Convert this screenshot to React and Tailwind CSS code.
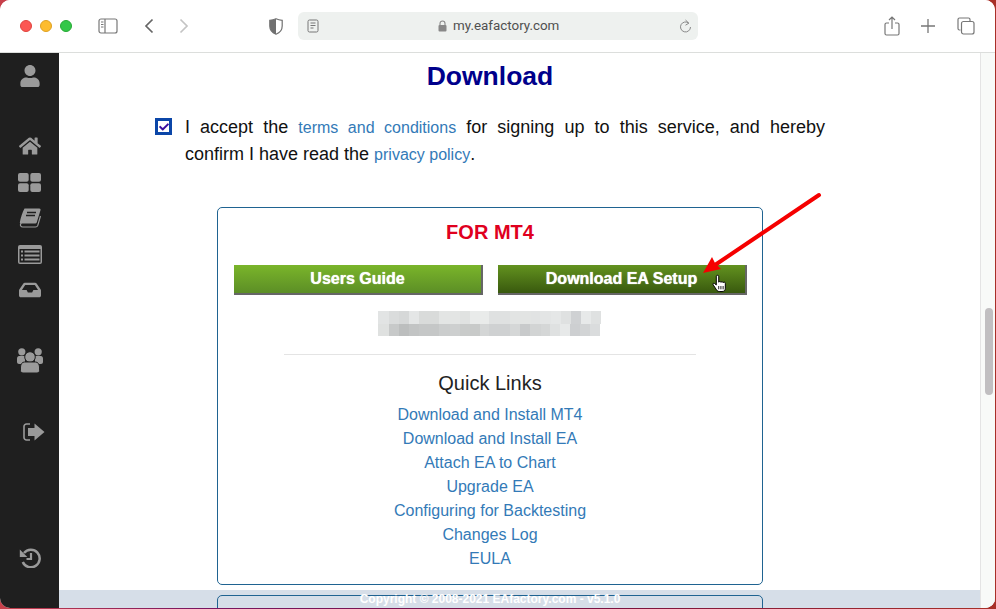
import React from "react";
import { FaUser, FaHome, FaInbox, FaCheck } from "react-icons/fa";

const links = [
  "Download and Install MT4",
  "Download and Install EA",
  "Attach EA to Chart",
  "Upgrade EA",
  "Configuring for Backtesting",
  "Changes Log",
  "EULA",
];

// blurred licence key, [width, colour] per mosaic cell
const blurTop = [
  [11, "#e2e4e4"], [10, "#dadcdc"], [10, "#d6d8d8"], [10, "#e4e6e6"], [20, "#d9dbda"],
  [21, "#e3e5e4"], [10, "#e0e2e1"], [19, "#e9ebea"], [21, "#dfe1e1"], [21, "#e2e4e3"],
  [9, "#e1e3e3"], [11, "#e3e5e5"], [10, "#e5e7e7"], [10, "#dfe1e1"], [10, "#cfd1d3"],
  [10, "#e7e9e9"], [10, "#dfe1e1"],
];
const blurBottom = [
  [11, "#dfe1e0"], [10, "#c7c9c9"], [10, "#bcbebe"], [10, "#c2c4c4"], [20, "#c5c7c7"],
  [11, "#cbcdcd"], [10, "#cdcfcf"], [10, "#c9cbca"], [10, "#c8cac9"], [9, "#d4d6d6"],
  [21, "#cfd1d2"], [10, "#d5d7d7"], [10, "#c8cacb"], [11, "#d2d4d4"], [9, "#d5d7d7"],
  [10, "#dfe1e1"], [10, "#e7e9e9"], [10, "#cdcfd1"], [10, "#d2d4d5"], [10, "#dadcdd"],
];

const BlurRow = ({ cells }) => (
  <div className="flex h-[12.5px]">
    {cells.map(([w, c], i) => (
      <div key={i} style={{ width: w, backgroundColor: c }} />
    ))}
  </div>
);

const ToolbarIcons = () => (
  <>
    {/* traffic lights */}
    <div className="flex gap-2 ml-[20px]">
      <div className="w-3 h-3 rounded-full bg-[#fc5753] border border-[#e0443e]" />
      <div className="w-3 h-3 rounded-full bg-[#fdbc2e] border border-[#dea123]" />
      <div className="w-3 h-3 rounded-full bg-[#33c748] border border-[#27aa35]" />
    </div>
    {/* sidebar toggle */}
    <svg className="ml-[26px]" width="20" height="16" viewBox="0 0 20 16" fill="none" stroke="#777" strokeWidth="1.2">
      <rect x="1" y="1" width="18" height="14" rx="2" />
      <path d="M7 1v14" />
      <path d="M3 4h2.500M3 6.500h2.500M3 9h2.500" strokeWidth="1.100" />
    </svg>
    {/* back / forward */}
    <svg className="ml-[26px]" width="10" height="16" viewBox="0 0 10 16" fill="none" stroke="#666" strokeWidth="1.7">
      <path d="M8.500 1.500L2 8l6.500 6.500" />
    </svg>
    <svg className="ml-[25px]" width="10" height="16" viewBox="0 0 10 16" fill="none" stroke="#c4c4c4" strokeWidth="1.7">
      <path d="M1.500 1.500L8 8l-6.500 6.500" />
    </svg>
    {/* shield */}
    <svg className="ml-[80px]" width="14" height="17" viewBox="0 0 14 17">
      <path d="M7 .8C5 1.800 3 2.200 .8 2.300V8c0 4 2.500 6.800 6.200 8.200 3.700-1.400 6.200-4.200 6.200-8.200V2.300C11 2.200 9 1.800 7 .8z" fill="#fff" stroke="#707070" strokeWidth="1.200" />
      <path d="M7 .8C5 1.800 3 2.200 .8 2.300V8c0 4 2.500 6.800 6.200 8.200z" fill="#707070" />
    </svg>
  </>
);

// font awesome 4 glyphs that the newer icon sets redrew
const GridIcon = () => (
  <svg width="23" height="19" viewBox="0 0 23 19" fill="#9a9a9a">
    <rect width="10.700" height="8.800" rx="2" />
    <rect x="12.300" width="10.700" height="8.800" rx="2" />
    <rect y="10.200" width="10.700" height="8.800" rx="2" />
    <rect x="12.300" y="10.200" width="10.700" height="8.800" rx="2" />
  </svg>
);

const BookIcon = () => (
  <svg width="22" height="20" viewBox="0 0 22 20">
    <path d="M5.500.5h14.800c1 0 1.500.8 1.200 1.800l-3.700 11.900c-.4 1.100-1 1.400-2 1.400H4c-1.300 0-2 .5-2.200 1.100L.8 14.500C1.500 10 3.500 4 5.500.5z" fill="#9a9a9a" />
    <path d="M1.700 15.800c-.7 1.700.2 3.200 2 3.200h12.800c1.200 0 1.900-.5 2.300-1.600L21.500 8" fill="none" stroke="#9a9a9a" strokeWidth="1.200" />
    <path d="M8 4.500h9M7 7.500h9" stroke="#1f1f1f" strokeWidth="1.300" />
  </svg>
);

const ListIcon = () => (
  <svg width="24" height="19" viewBox="0 0 24 19">
    <rect width="24" height="19" rx="2" fill="#9a9a9a" />
    <rect x="1.500" y="4" width="21" height="13.500" fill="#1f1f1f" />
    <g fill="#9a9a9a">
      <rect x="3" y="5.500" width="2" height="2" />
      <rect x="3" y="9.500" width="2" height="2" />
      <rect x="3" y="13.500" width="2" height="2" />
      <rect x="6.500" y="5.500" width="15" height="2" />
      <rect x="6.500" y="9.500" width="15" height="2" />
      <rect x="6.500" y="13.500" width="15" height="2" />
    </g>
  </svg>
);

const UsersIcon = () => (
  <svg width="26" height="25" viewBox="0 0 26 25" fill="#9a9a9a">
    <circle cx="4.800" cy="3.800" r="3.600" />
    <circle cx="21.200" cy="3.800" r="3.600" />
    <path d="M0 10.500C0 9 1 8 2 8h6v8H2c-1 0-2-.8-2-2z" />
    <path d="M26 10.500C26 9 25 8 24 8h-6v8h6c1 0 2-.8 2-2z" />
    <circle cx="13" cy="9" r="5.300" stroke="#1f1f1f" strokeWidth="1" />
    <path d="M3.500 19c0-3 1.800-5 4-5h11c2.200 0 4 2 4 5v3.500c0 1.500-1 2.500-2.500 2.500H6c-1.500 0-2.500-1-2.500-2.500z" stroke="#1f1f1f" strokeWidth="1" />
  </svg>
);

const SignOutIcon = () => (
  <svg width="22" height="18" viewBox="0 0 22 18">
    <path d="M7 1H3.500A2.500 2.500 0 001 3.500v11A2.500 2.500 0 003.500 17H7" fill="none" stroke="#9a9a9a" strokeWidth="1.600" />
    <path d="M5 5h6.500V.5L21.500 9l-10 8.500V13H5z" fill="#9a9a9a" />
  </svg>
);

const HistoryIcon = () => (
  <svg width="22" height="20" viewBox="0 0 22 20" fill="none">
    <path d="M5 5A8.800 8.800 0 1 1 3.800 14" stroke="#9a9a9a" strokeWidth="2.500" />
    <path d="M.8 1.500V9h7.500z" fill="#9a9a9a" />
    <path d="M12 5v6H7.500" stroke="#9a9a9a" strokeWidth="2.200" />
  </svg>
);

const App = () => {
  const side = "h-9 flex items-center justify-center text-[#9a9a9a] text-[22px]";
  return (
    <div className="w-[996px] h-[609px] overflow-hidden bg-[linear-gradient(90deg,#c8404a_0%,#7a1560_20%,#7a1040_60%,#a83028_100%)]">
      <div className="w-[995px] h-[608px] rounded-[10px] overflow-hidden bg-white flex flex-col font-['Liberation_Sans',Arial,sans-serif] relative">
        {/* browser toolbar */}
        <div className="h-[53px] shrink-0 border-b border-[#dcdedc] flex items-center bg-white">
          <ToolbarIcons />
          <div className="ml-[15px] w-[400px] h-[28px] rounded-[6px] bg-[#eef1ef] flex items-center relative">
            <svg className="ml-[9px]" width="12" height="14" viewBox="0 0 12 14" fill="none" stroke="#777" strokeWidth="1">
              <rect x="1" y="1" width="10" height="12" rx="1.500" />
              <path d="M3.500 4h5M3.500 6.500h5M3.500 9h3" />
            </svg>
            <div className="absolute left-[140px] top-0 h-full flex items-center gap-[6px] text-[13.4px] text-[#505050] font-['Roboto',sans-serif]">
              <svg width="9" height="12" viewBox="0 0 9 12" fill="none">
                <path d="M2 5V3.500a2.500 2.500 0 015 0V5" stroke="#888" strokeWidth="1.100" />
                <rect x=".5" y="5" width="8" height="6.500" rx="1" fill="#888" />
              </svg>
              <span>my.eafactory.com</span>
            </div>
            <svg className="absolute right-[6px] top-[7px]" width="13" height="15" viewBox="0 0 13 15" fill="none" stroke="#888" strokeWidth="1">
              <path d="M9.800 4.200A5 5 0 1011.500 8" />
              <path d="M6.500 1l3.300 3.200-3.300 2" />
            </svg>
          </div>
          <svg className="ml-[186px]" width="16" height="20" viewBox="0 0 16 20" fill="none" stroke="#777" strokeWidth="1.200">
            <path d="M5 7H2.500a1.500 1.500 0 00-1.500 1.500v9A1.500 1.500 0 002.500 19h11a1.500 1.500 0 001.500-1.500v-9A1.500 1.500 0 0013.500 7H11" />
            <path d="M8 13V1.500M5 4l3-3 3 3" />
          </svg>
          <svg className="ml-[21px]" width="14" height="14" viewBox="0 0 14 14" stroke="#777" strokeWidth="1.300">
            <path d="M7 0v14M0 7h14" />
          </svg>
          <svg className="ml-[22px]" width="18" height="18" viewBox="0 0 18 18" fill="none" stroke="#777" strokeWidth="1.200">
            <path d="M3.500 13H2.500A1.500 1.500 0 011 11.500v-9A1.500 1.500 0 012.500 1h9A1.500 1.500 0 0113 2.500V4" />
            <rect x="4.500" y="4.500" width="12.500" height="12.500" rx="2" />
          </svg>
        </div>

        <div className="flex-1 flex min-h-0">
          {/* left nav */}
          <div className="w-[59px] shrink-0 bg-[#1f1f1f] pt-[5px] flex flex-col">
            <div className={side}><FaUser /></div>
            <div className={`${side} mt-[34px]`}><FaHome /></div>
            <div className={side}><GridIcon /></div>
            <div className={side}><BookIcon /></div>
            <div className={side}><ListIcon /></div>
            <div className={side}><FaInbox /></div>
            <div className={`${side} mt-[34px]`}><UsersIcon /></div>
            <div className={`${side} mt-9 pl-[8px]`}><SignOutIcon /></div>
            <div className={`${side} mt-[90px]`}><HistoryIcon /></div>
          </div>

          {/* page */}
          <div className="flex-1 relative overflow-hidden bg-white">
            <div className="relative z-10 pl-[96px] pt-[7px]">
              <div className="w-[670px]">
                <h1 className="text-center text-[26.5px] leading-[32px] font-bold text-[#00008b]">Download</h1>
                <div className="flex mt-[22px]">
                  <div className="w-[17px] h-[17px] mt-[4px] shrink-0 border-[3px] border-[#0b46a8] flex items-center justify-center text-[#3b0fa0] text-[10px]">
                    <FaCheck />
                  </div>
                  <div className="ml-[13px] flex-1 text-[18px] leading-[27px] text-[#111]">
                    <p className="[text-align-last:justify]">
                      I accept the <a className="text-[16px] text-[#337ab7]">terms and conditions</a> for signing up to this service, and hereby
                    </p>
                    <p>
                      confirm I have read the <a className="text-[16px] text-[#337ab7]">privacy policy</a>.
                    </p>
                  </div>
                </div>

                <div className="ml-[62px] mt-[39px] w-[546px] h-[378px] border border-[#1f6391] rounded-[5px] px-4 pt-[13px] bg-white">
                  <div className="text-center text-[20px] leading-[23px] font-bold text-[#e0001e]">FOR MT4</div>
                  <div className="flex gap-[15px] mt-[21px]">
                    <div className="w-[249px] h-[30px] shrink-0 flex items-center justify-center border-r-2 border-b-2 border-[#666] bg-[linear-gradient(#7ab52a,#5c8e26)] text-white text-[16px] font-bold [text-shadow:0_0_1px_#fff]">
                      Users Guide
                    </div>
                    <div className="w-[249px] h-[30px] shrink-0 flex items-center justify-center border-r-2 border-b-2 border-[#666] bg-[linear-gradient(#63921f,#39590e)] text-white text-[16px] font-bold [text-shadow:0_0_1px_#fff]">
                      Download EA Setup
                    </div>
                  </div>
                  <div className="w-[223px] ml-[144px] mt-[16px]">
                    <BlurRow cells={blurTop} />
                    <BlurRow cells={blurBottom} />
                  </div>
                  <div className="mx-[50px] mt-[18px] h-px bg-[#e4e4e4]" />
                  <div className="text-center text-[20px] leading-[24px] text-[#222] mt-[16px]">Quick Links</div>
                  <div className="mt-[8px] flex flex-col items-center text-[16px] leading-[24px] text-[#337ab7]">
                    {links.map((l) => (
                      <a key={l}>{l}</a>
                    ))}
                  </div>
                </div>

                <div className="ml-[62px] mt-[10px] w-[546px] h-[40px] border border-[#1f6391] rounded-[5px]" />
              </div>
            </div>

            {/* footer bar */}
            <div className="absolute left-0 right-0 bottom-0 h-[18px] bg-[#d6dee8] z-0" />
            <div className="absolute left-0 w-[862px] bottom-0 h-[18px] z-20 flex items-center justify-center text-white text-[12px] font-bold">
              Copyright © 2008-2021 EAfactory.com - v5.1.0
            </div>

            {/* scrollbar */}
            <div className="absolute right-0 top-0 bottom-0 w-[15px] bg-[#f8faf8] border-l border-[#e4e4e4] z-30">
              <div className="absolute left-[4px] top-[255px] w-[8px] h-[87px] rounded-full bg-[#c1bfc1]" />
            </div>
          </div>
        </div>

        {/* red annotation arrow and pointer */}
        <svg className="absolute left-0 top-0 z-40 pointer-events-none" width="995" height="608" viewBox="0 0 995 608">
          <path d="M819 195L715 265" stroke="#f50000" strokeWidth="4" strokeLinecap="round" />
          <path d="M703 273L712 257L715 263L721 269z" fill="#f50000" />
          <g transform="translate(713 275) scale(1.100)">
            <path d="M3 1v8L1.500 7.800C.5 7 -.5 8 .2 9l3 4.500c.8 1.200 1.500 1.500 3 1.500h2c2 0 3-1 3-3V7.500c0-1.200-1.500-1.300-2-.5 0-1-1.500-1.200-2-.3 0-1-1.500-1-2-.2V1C5.200 0 3 0 3 1z" fill="#fff" stroke="#000" strokeWidth=".9" />
            <path d="M5.200 10v3M7.200 10v3M9.200 10v3" stroke="#000" strokeWidth=".8" />
          </g>
        </svg>
      </div>
    </div>
  );
};

export default App;
